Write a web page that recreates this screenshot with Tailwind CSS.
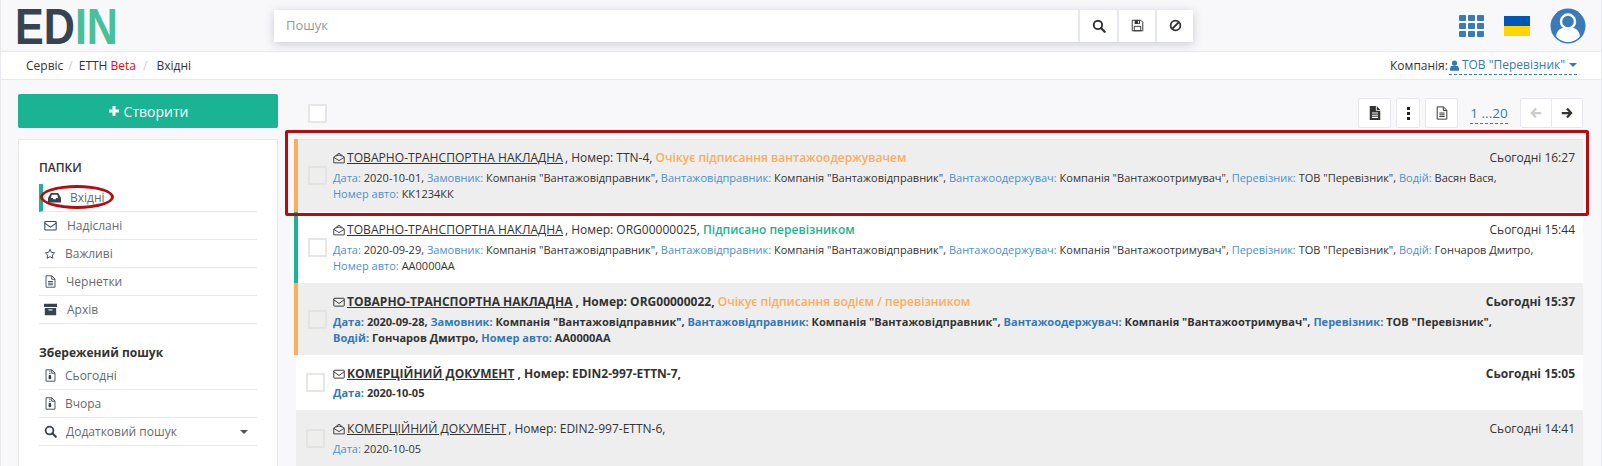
<!DOCTYPE html>
<html lang="uk">
<head>
<meta charset="UTF-8">
<title>EDIN</title>
<script src="https://cdn.jsdelivr.net/npm/@tailwindcss/browser@4"></script>
</head>
<body class="bg-[#f8f8fb] font-['Open_Sans',sans-serif] text-[#333] overflow-hidden">
<svg class="hidden">
  <symbol id="mail-open" viewBox="0 0 16 16"><path d="M1 7 8 1.500 15 7v7.500H1z M1 7l7 4.500L15 7 M3.500 5.500 8 4l4.500 1.500" fill="none" stroke="currentColor" stroke-width="1.200"/></symbol>
  <symbol id="mail" viewBox="0 0 16 16"><rect x="1" y="3" width="14" height="10.500" rx="1" fill="none" stroke="currentColor" stroke-width="1.300"/><path d="M1 5l7 5 7-5" fill="none" stroke="currentColor" stroke-width="1.300"/></symbol>
  <symbol id="star" viewBox="0 0 16 16"><path d="M8 1.800l1.900 4 4.300.6-3.100 3 .8 4.300L8 11.600l-3.900 2.100.8-4.300-3.100-3 4.300-.6z" fill="none" stroke="currentColor" stroke-width="1.200"/></symbol>
  <symbol id="file-text" viewBox="0 0 16 16"><path d="M2.500 1h7.200L13.500 5v10h-11z M9.500 1v4.200h4 M5 8h6 M5 10h6 M5 12h6" fill="none" stroke="currentColor" stroke-width="1.100"/></symbol>
  <symbol id="file-solid" viewBox="0 0 16 16"><path d="M2 0h7v5.500h5V16H2z M10 0l4 4.500h-4z" fill="currentColor"/><path d="M4.500 8h7 M4.500 10.500h7 M4.500 13h7" stroke="#fff" stroke-width="1.200"/></symbol>
  <symbol id="file-zip" viewBox="0 0 16 16"><path d="M2.500 1h7.200L13.500 5v10h-11z M9.500 1v4.200h4" fill="none" stroke="currentColor" stroke-width="1.100"/><path d="M6.500 2h1.500v1.500H6.500z M6.500 4.500h1.500V6H6.500z M6 7.500h2.500l.5 3.500a1.500 1.500 0 1 1-3.500 0z" fill="currentColor"/></symbol>
  <symbol id="archive" viewBox="0 0 16 16"><path d="M0 1h16v4H0z M1 6h14v9H1z" fill="currentColor"/><path d="M5.500 8.500h5" stroke="#fff" stroke-width="1.300"/></symbol>
  <symbol id="inbox" viewBox="0 0 16 16"><path d="M3.500 2.500h9L16 8.500V14H0V8.500z" fill="currentColor"/><path d="M3.500 8.500l1.200-4h6.600l1.200 4h-2.500l-.8 1.500H6.800L6 8.500z" fill="#fff"/></symbol>
  <symbol id="search" viewBox="0 0 16 16"><circle cx="6.800" cy="6.800" r="4.800" fill="none" stroke="currentColor" stroke-width="2.200"/><path d="M10.300 10.300l4.200 4.200" stroke="currentColor" stroke-width="2.600" stroke-linecap="round"/></symbol>
  <symbol id="save" viewBox="0 0 16 16"><path d="M1.500 1.500h10.500l2.500 2.500V14.500h-13z" fill="none" stroke="currentColor" stroke-width="1.200"/><path d="M4.500 1.500h6.500v4.700H4.500z M8.500 2.500h1.300v2.700H8.500z" fill="currentColor" fill-rule="evenodd"/><rect x="4" y="9" width="8" height="5.500" fill="none" stroke="currentColor" stroke-width="1.100"/></symbol>
  <symbol id="ban" viewBox="0 0 16 16"><circle cx="8" cy="8" r="6" fill="none" stroke="currentColor" stroke-width="2.200"/><path d="M4 12l8-8" stroke="currentColor" stroke-width="2.200"/></symbol>
  <symbol id="user" viewBox="0 0 16 16"><circle cx="8" cy="4.500" r="3.800" fill="currentColor"/><path d="M1.500 15.500v-3.500a4 4 0 0 1 4-3.500h5a4 4 0 0 1 4 3.500v3.500z" fill="currentColor"/></symbol>
  <symbol id="arrow-left" viewBox="0 0 16 16"><path d="M8 2 2.500 8 8 14 M3 8H15" fill="none" stroke="currentColor" stroke-width="3"/></symbol>
  <symbol id="arrow-right" viewBox="0 0 16 16"><path d="M8 2l5.500 6L8 14 M13 8H1" fill="none" stroke="currentColor" stroke-width="3"/></symbol>
</svg>

<div class="relative h-[466px] w-[1602px] overflow-hidden border-x border-[#e7e7ee]">

  <!-- top bar -->
  <header class="flex h-[52px] items-center border-b border-[#e7e7ee] pl-[17px] pr-[15px]">
    <svg class="h-[36px] w-[100px] shrink-0 overflow-visible font-['Liberation_Sans',sans-serif] text-[50px] font-bold" viewBox="0 0 100 36">
      <text x="-3" y="36" textLength="103" lengthAdjust="spacingAndGlyphs"><tspan fill="#364351">ED</tspan><tspan fill="#48c09a">IN</tspan></text>
    </svg>
    <div class="ml-[156px] flex h-[32px] w-[919px] bg-white shadow-[0_2px_10px_rgba(60,60,90,0.25)]">
      <div class="flex flex-1 items-center pl-[12px] text-[13px] text-[#999]">Пошук</div>
      <button class="flex w-[39px] items-center justify-center border-l-2 border-[#e7e7ee]"><svg class="h-[14px] w-[14px]"><use href="#search"/></svg></button>
      <button class="flex w-[38px] items-center justify-center border-l-2 border-[#e7e7ee]"><svg class="h-[13px] w-[13px]"><use href="#save"/></svg></button>
      <button class="flex w-[38px] items-center justify-center border-l-2 border-[#e7e7ee]"><svg class="h-[13px] w-[13px]"><use href="#ban"/></svg></button>
    </div>
    <div class="ml-auto flex items-center">
      <div class="grid grid-cols-3 gap-[2px]">
        <i class="h-[6px] w-[7px] rounded-[1px] bg-[#3b7ab8]"></i><i class="h-[6px] w-[7px] rounded-[1px] bg-[#3b7ab8]"></i><i class="h-[6px] w-[7px] rounded-[1px] bg-[#3b7ab8]"></i>
        <i class="h-[6px] w-[7px] rounded-[1px] bg-[#3b7ab8]"></i><i class="h-[6px] w-[7px] rounded-[1px] bg-[#3b7ab8]"></i><i class="h-[6px] w-[7px] rounded-[1px] bg-[#3b7ab8]"></i>
        <i class="h-[6px] w-[7px] rounded-[1px] bg-[#3b7ab8]"></i><i class="h-[6px] w-[7px] rounded-[1px] bg-[#3b7ab8]"></i><i class="h-[6px] w-[7px] rounded-[1px] bg-[#3b7ab8]"></i>
      </div>
      <div class="ml-[20px] w-[26px]"><div class="h-[10px] bg-[#0057b7]"></div><div class="h-[10px] bg-[#ffd700]"></div></div>
      <svg class="ml-[20px] h-[36px] w-[36px]" viewBox="0 0 36 36"><circle cx="18" cy="18" r="17.500" fill="#3b7ab8"/><circle cx="18" cy="13.500" r="7" fill="none" stroke="#fff" stroke-width="2.500"/><path d="M6 28c1-6 5-8 7-8h10c2 0 6 2 7 8-3 4-8 6-12 6s-9-2-12-6z" fill="#fff"/></svg>
    </div>
  </header>

  <!-- breadcrumb -->
  <div class="flex h-[28px] items-center border-b border-[#e7e7ee] bg-white pl-[25px] pr-[24px] text-[12px]">
    <span>Сервіс</span><span class="mx-[5px] text-[#ccc]">/</span>
    <span class="ml-[1px]">ЕТТН <span class="font-medium text-[#f00]">Beta</span></span><span class="ml-[7px] mr-[8px] text-[#ccc]">/</span>
    <span class="ml-[1px]">Вхідні</span>
    <div class="ml-auto flex items-center">
      <span class="mr-[1px]">Компанія:</span>
      <span class="flex items-center border-b border-dashed border-[#337ab7] text-[#337ab7]">
        <svg class="mr-[2px] h-[11px] w-[11px]"><use href="#user"/></svg>ТОВ "Перевізник"
        <i class="ml-[4px] h-0 w-0 border-x-[4px] border-t-[4px] border-x-transparent border-t-[#337ab7]"></i>
      </span>
    </div>
  </div>

  <div class="flex pl-[17px]">
    <!-- sidebar -->
    <aside class="w-[260px] shrink-0 pt-[14px]">
      <button class="flex h-[34px] w-full items-center justify-center rounded-[2px] bg-[#1ab394] text-[14px] text-white">
        <svg class="mr-[4px] h-[12px] w-[12px]" viewBox="0 0 12 12"><path d="M6 1v10M1 6h10" stroke="#fff" stroke-width="3"/></svg>Створити
      </button>
      <div class="mt-[11px] h-[340px] border border-[#e7e7ee] bg-white px-[20px] pt-[19px] text-[12px] text-[#676a6c]">
        <h3 class="mb-[7px] text-[12px] font-semibold text-[#333]">ПАПКИ</h3>
        <ul>
          <li class="flex h-[28px] items-center border-b border-[#e7e7ee] border-l-4 border-l-[#1ab394] pl-[5px]"><svg class="h-[13px] w-[13px] text-[#364351]"><use href="#inbox"/></svg><span class="ml-[9px]">Вхідні</span></li>
          <li class="flex h-[28px] items-center border-b border-[#e7e7ee] pl-[5px]"><svg class="h-[13px] w-[13px] text-[#364351]"><use href="#mail"/></svg><span class="ml-[10px]">Надіслані</span></li>
          <li class="flex h-[28px] items-center border-b border-[#e7e7ee] pl-[5px]"><svg class="h-[12px] w-[12px] text-[#364351]"><use href="#star"/></svg><span class="ml-[9px]">Важливі</span></li>
          <li class="flex h-[28px] items-center border-b border-[#e7e7ee] pl-[5px]"><svg class="h-[13px] w-[13px] text-[#364351]"><use href="#file-text"/></svg><span class="ml-[9px]">Чернетки</span></li>
          <li class="flex h-[28px] items-center border-b border-[#e7e7ee] pl-[5px]"><svg class="h-[13px] w-[13px] text-[#364351]"><use href="#archive"/></svg><span class="ml-[10px]">Архів</span></li>
        </ul>
        <h3 class="mt-[20px] text-[12px] font-bold text-[#333]">Збережений пошук</h3>
        <ul>
          <li class="flex h-[28px] items-center border-b border-[#e7e7ee] pl-[5px]"><svg class="h-[13px] w-[13px] text-[#364351]"><use href="#file-zip"/></svg><span class="ml-[8px]">Сьогодні</span></li>
          <li class="flex h-[28px] items-center border-b border-[#e7e7ee] pl-[5px]"><svg class="h-[13px] w-[13px] text-[#364351]"><use href="#file-zip"/></svg><span class="ml-[8px]">Вчора</span></li>
          <li class="flex h-[28px] items-center border-b border-[#e7e7ee] pl-[5px]"><svg class="h-[13px] w-[13px] text-[#364351]"><use href="#search"/></svg><span class="ml-[9px]">Додатковий пошук</span><i class="ml-auto mr-[9px] h-0 w-0 border-x-[4px] border-t-[4px] border-x-transparent border-t-[#555]"></i></li>
        </ul>
      </div>
    </aside>

    <!-- list -->
    <main class="ml-[16px] w-[1289px]">
      <div class="flex h-[59px] items-start">
        <i class="ml-[14px] mt-[24px] h-[19px] w-[19px] border-2 border-[#e7e6e2] bg-white"></i>
        <div class="ml-auto mt-[18px] flex items-center">
          <button class="flex h-[30px] w-[33px] items-center justify-center rounded-[2px] border border-[#e7e7ee] bg-white"><svg class="h-[14px] w-[14px]"><use href="#file-solid"/></svg></button>
          <button class="ml-[5px] flex h-[30px] w-[24px] flex-col items-center justify-center gap-[2px] rounded-[2px] border border-[#e7e7ee] bg-white"><i class="h-[3px] w-[3px] bg-[#222]"></i><i class="h-[3px] w-[3px] bg-[#222]"></i><i class="h-[3px] w-[3px] bg-[#222]"></i></button>
          <button class="ml-[5px] flex h-[30px] w-[33px] items-center justify-center rounded-[2px] border border-[#e7e7ee] bg-white"><svg class="h-[14px] w-[14px]"><use href="#file-text"/></svg></button>
          <span class="ml-[12px] w-[38px] whitespace-nowrap border-b border-dashed border-[#337ab7] text-center text-[13.500px] leading-[20px] text-[#337ab7]">1 ...20</span>
          <button class="ml-[12px] flex h-[30px] w-[32px] items-center justify-center rounded-l-[2px] border border-[#e7e7ee] bg-white text-[#ccc]"><svg class="h-[12px] w-[12px]"><use href="#arrow-left"/></svg></button>
          <button class="flex h-[30px] w-[31px] items-center justify-center rounded-r-[2px] border border-l-0 border-[#e7e7ee] bg-white"><svg class="h-[12px] w-[12px]"><use href="#arrow-right"/></svg></button>
        </div>
      </div>

      <!-- row 1 -->
      <div class="flex h-[73px] items-center border-l-4 border-l-[#fbad5b] bg-[#eee] shadow-[inset_0_1px_0_#e4e4ec]">
        <i class="ml-[10px] h-[19px] w-[19px] shrink-0 border-2 border-[#e4e3df]"></i>
        <div class="ml-[6px] flex-1 self-start pr-[8px] pt-[9px] whitespace-nowrap">
          <div class="flex h-[20px] items-center text-[12px]"><svg class="mr-[2px] h-[12px] w-[12px]"><use href="#mail-open"/></svg><u class="text-[12.100px]">ТОВАРНО-ТРАНСПОРТНА НАКЛАДНА</u><span class="ml-[2px]">, Номер: TTN-4,&nbsp;</span><span class="font-semibold text-[#fbad5b]">Очікує підписання вантажоодержувачем</span><span class="ml-auto">Сьогодні 16:27</span></div>
          <div class="mt-[2px] text-[11.020px] leading-[16px]"><b class="font-normal text-[#4a90d0]">Дата:</b> 2020-10-01, <b class="font-normal text-[#4a90d0]">Замовник:</b> Компанія "Вантажовідправник", <b class="font-normal text-[#4a90d0]">Вантажовідправник:</b> Компанія "Вантажовідправник", <b class="font-normal text-[#4a90d0]">Вантажоодержувач:</b> Компанія "Вантажоотримувач", <b class="font-normal text-[#4a90d0]">Перевізник:</b> ТОВ "Перевізник", <b class="font-normal text-[#4a90d0]">Водій:</b> Васян Вася,<br><b class="font-normal text-[#4a90d0]">Номер авто:</b> КК1234КК</div>
        </div>
      </div>

      <!-- row 2 -->
      <div class="flex h-[71px] items-center border-l-4 border-l-[#1ab394] bg-white">
        <i class="ml-[10px] h-[19px] w-[19px] shrink-0 border-2 border-[#e7e6e2]"></i>
        <div class="ml-[6px] flex-1 self-start pr-[8px] pt-[8px] whitespace-nowrap">
          <div class="flex h-[20px] items-center text-[12px]"><svg class="mr-[2px] h-[12px] w-[12px]"><use href="#mail-open"/></svg><u class="text-[12.100px]">ТОВАРНО-ТРАНСПОРТНА НАКЛАДНА</u><span class="ml-[2px]">, Номер: ORG00000025,&nbsp;</span><span class="font-semibold text-[#1ab394]">Підписано перевізником</span><span class="ml-auto">Сьогодні 15:44</span></div>
          <div class="mt-[2px] text-[11.020px] leading-[16px]"><b class="font-normal text-[#4a90d0]">Дата:</b> 2020-09-29, <b class="font-normal text-[#4a90d0]">Замовник:</b> Компанія "Вантажовідправник", <b class="font-normal text-[#4a90d0]">Вантажовідправник:</b> Компанія "Вантажовідправник", <b class="font-normal text-[#4a90d0]">Вантажоодержувач:</b> Компанія "Вантажоотримувач", <b class="font-normal text-[#4a90d0]">Перевізник:</b> ТОВ "Перевізник", <b class="font-normal text-[#4a90d0]">Водій:</b> Гончаров Дмитро,<br><b class="font-normal text-[#4a90d0]">Номер авто:</b> АА0000АА</div>
        </div>
      </div>

      <!-- row 3 -->
      <div class="flex h-[72px] items-center border-l-4 border-l-[#fbad5b] bg-[#eee]">
        <i class="ml-[10px] h-[19px] w-[19px] shrink-0 border-2 border-[#e4e3df]"></i>
        <div class="ml-[6px] flex-1 self-start pr-[8px] pt-[9px] whitespace-nowrap font-bold">
          <div class="flex h-[20px] items-center text-[12px]"><svg class="mr-[2px] h-[12px] w-[12px]"><use href="#mail"/></svg><u>ТОВАРНО-ТРАНСПОРТНА НАКЛАДНА</u><span>&nbsp;, Номер: ORG00000022,&nbsp;</span><span class="font-semibold text-[#fbad5b]">Очікує підписання водієм / перевізником</span><span class="ml-auto">Сьогодні 15:37</span></div>
          <div class="mt-[2px] text-[11.040px] leading-[16px]"><span class="text-[#337ab7]">Дата:</span> 2020-09-28, <span class="text-[#337ab7]">Замовник:</span> Компанія "Вантажовідправник", <span class="text-[#337ab7]">Вантажовідправник:</span> Компанія "Вантажовідправник", <span class="text-[#337ab7]">Вантажоодержувач:</span> Компанія "Вантажоотримувач", <span class="text-[#337ab7]">Перевізник:</span> ТОВ "Перевізник",<br><span class="text-[#337ab7]">Водій:</span> Гончаров Дмитро, <span class="text-[#337ab7]">Номер авто:</span> АА0000АА</div>
        </div>
      </div>

      <!-- row 4 -->
      <div class="ml-[2px] flex h-[55px] items-center bg-white">
        <i class="ml-[10px] h-[19px] w-[19px] shrink-0 border-2 border-[#e7e6e2]"></i>
        <div class="ml-[8px] flex-1 self-start pr-[8px] pt-[9px] whitespace-nowrap font-bold">
          <div class="flex h-[20px] items-center text-[12px]"><svg class="mr-[2px] h-[12px] w-[12px]"><use href="#mail"/></svg><u>КОМЕРЦІЙНИЙ ДОКУМЕНТ</u><span>&nbsp;, Номер: EDIN2-997-ETTN-7,</span><span class="ml-auto">Сьогодні 15:05</span></div>
          <div class="text-[11.040px] leading-[18px]"><span class="text-[#337ab7]">Дата:</span> 2020-10-05</div>
        </div>
      </div>

      <!-- row 5 -->
      <div class="ml-[2px] flex h-[56px] items-center bg-[#eee]">
        <i class="ml-[10px] h-[19px] w-[19px] shrink-0 border-2 border-[#e4e3df]"></i>
        <div class="ml-[8px] flex-1 self-start pr-[8px] pt-[9px] whitespace-nowrap">
          <div class="flex h-[20px] items-center text-[12px]"><svg class="mr-[2px] h-[12px] w-[12px]"><use href="#mail-open"/></svg><u class="text-[12.100px]">КОМЕРЦІЙНИЙ ДОКУМЕНТ</u><span class="ml-[2px]">, Номер: EDIN2-997-ETTN-6,</span><span class="ml-auto">Сьогодні 14:41</span></div>
          <div class="mt-[1px] text-[11px] leading-[18px]"><span class="text-[#4a90d0]">Дата:</span> 2020-10-05</div>
        </div>
      </div>
    </main>
  </div>

  <!-- red annotations drawn over the screenshot -->
  <div class="pointer-events-none absolute left-[284px] top-[130px] h-[86px] w-[1304px] rounded-[2px] border-[3px] border-[#b50c12]"></div>
  <div class="pointer-events-none absolute left-[39px] top-[185px] h-[24px] w-[74px] rounded-[50%] border-[3px] border-[#b50c12]"></div>
</div>
</body>
</html>
